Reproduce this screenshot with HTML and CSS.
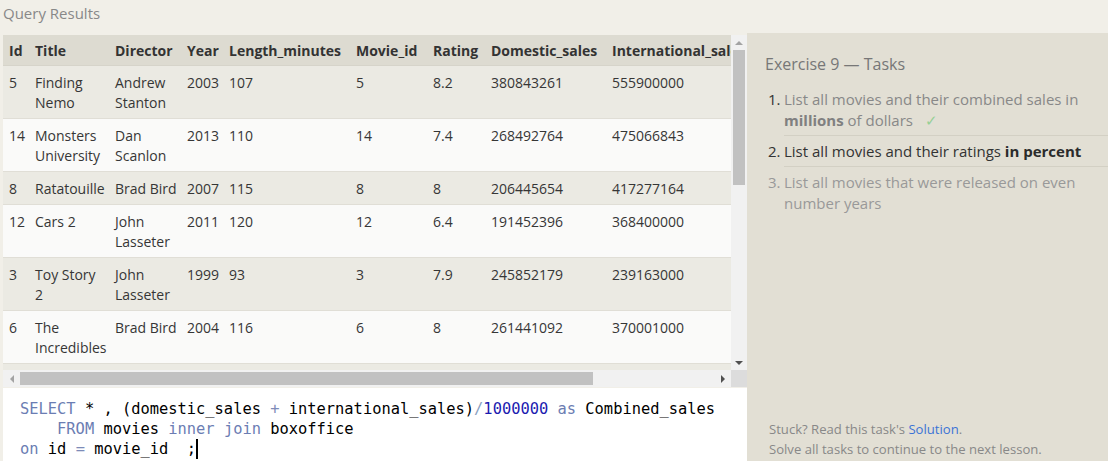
FILE: index.html
```html
<!DOCTYPE html>
<html lang="en">
<head>
<meta charset="utf-8">
<title>Query Results</title>
<link rel="stylesheet" href="styles.css">
</head>
<body>
<div class="app">
  <section class="left">
    <div class="title">Query Results</div>
    <div class="results">
      <div class="viewport">
        <table class="grid">
          <colgroup>
            <col class="c-id"><col class="c-title"><col class="c-dir"><col class="c-year"><col class="c-len"><col class="c-mid"><col class="c-rat"><col class="c-dom"><col class="c-int"><col class="c-comb">
          </colgroup>
          <thead>
            <tr><th>Id</th><th>Title</th><th>Director</th><th>Year</th><th>Length_minutes</th><th>Movie_id</th><th>Rating</th><th>Domestic_sales</th><th>International_sales</th><th>Combined_sales</th></tr>
          </thead>
          <tbody>
            <tr><td>5</td><td>Finding<br>Nemo</td><td>Andrew<br>Stanton</td><td>2003</td><td>107</td><td>5</td><td>8.2</td><td>380843261</td><td>555900000</td><td>936</td></tr>
            <tr><td>14</td><td>Monsters<br>University</td><td>Dan<br>Scanlon</td><td>2013</td><td>110</td><td>14</td><td>7.4</td><td>268492764</td><td>475066843</td><td>743</td></tr>
            <tr><td>8</td><td>Ratatouille</td><td>Brad Bird</td><td>2007</td><td>115</td><td>8</td><td>8</td><td>206445654</td><td>417277164</td><td>623</td></tr>
            <tr><td>12</td><td>Cars 2</td><td>John<br>Lasseter</td><td>2011</td><td>120</td><td>12</td><td>6.4</td><td>191452396</td><td>368400000</td><td>559</td></tr>
            <tr><td>3</td><td>Toy Story<br>2</td><td>John<br>Lasseter</td><td>1999</td><td>93</td><td>3</td><td>7.9</td><td>245852179</td><td>239163000</td><td>485</td></tr>
            <tr><td>6</td><td>The<br>Incredibles</td><td>Brad Bird</td><td>2004</td><td>116</td><td>6</td><td>8</td><td>261441092</td><td>370001000</td><td>631</td></tr>
            <tr><td>7</td><td>Cars</td><td>John<br>Lasseter</td><td>2006</td><td>117</td><td>7</td><td>7.2</td><td>244082982</td><td>217900167</td><td>461</td></tr>
          </tbody>
        </table>
      </div>
      <div class="vscroll">
        <div class="sbtn"><span class="tri tri-up"></span></div>
        <div class="vtrack"><div class="vthumb"></div></div>
        <div class="sbtn"><span class="tri tri-down"></span></div>
      </div>
      <div class="hscroll">
        <div class="sbtn hbtn"><span class="tri tri-left"></span></div>
        <div class="htrack"><div class="hthumb"></div></div>
        <div class="sbtn hbtn"><span class="tri tri-right"></span></div>
      </div>
      <div class="corner"></div>
    </div>
    <div class="editor"><pre class="code"><span class="kw">SELECT</span> * , (domestic_sales <span class="op">+</span> international_sales)<span class="sl">/</span><span class="num">1000000</span> <span class="kw">as</span> Combined_sales
    <span class="kw">FROM</span> movies <span class="kw">inner join</span> boxoffice
<span class="kw">on</span> id <span class="op">=</span> movie_id  ;<span class="caret"></span></pre></div>
  </section>
  <aside class="panel">
    <h2 class="ex-title">Exercise 9 — Tasks</h2>
    <ol class="tasks">
      <li class="task done"><span class="n">1.</span><div class="tbody">List all movies and their combined sales in<br><b>millions</b> of dollars <span class="check">✓</span></div></li>
      <li class="task active"><span class="n">2.</span><div class="tbody">List all movies and their ratings <b>in percent</b></div></li>
      <li class="task todo"><span class="n">3.</span><div class="tbody">List all movies that were released on even<br>number years</div></li>
    </ol>
    <div class="foot">
      <div>Stuck? Read this task's <a class="sol" href="#">Solution</a>.</div>
      <div>Solve all tasks to continue to the next lesson.</div>
    </div>
  </aside>
</div>
</body>
</html>
```
FILE: styles.css
```css
* { box-sizing: border-box; }
html, body { margin: 0; padding: 0; }
body {
  width: 1108px;
  height: 461px;
  overflow: hidden;
  background: #f1efe8;
  font-family: "Open Sans", "Noto Sans", sans-serif;
  color: #363636;
}
.app {
  display: grid;
  grid-template-columns: 747px 361px;
  height: 461px;
}
.left {
  padding-left: 3px;
  display: flex;
  flex-direction: column;
}
.title {
  height: 35px;
  font-size: 15px;
  line-height: 27px;
  color: #888;
}
.results {
  display: grid;
  grid-template-columns: 728px 16px;
  grid-template-rows: 335px 17px;
}
.viewport {
  overflow: hidden;
  background: #fafaf9;
}
.grid {
  border-collapse: collapse;
  table-layout: fixed;
  width: 881px;
  font-size: 14px;
  line-height: 20px;
}
.c-id { width: 26px; }
.c-title { width: 80px; }
.c-dir { width: 72px; }
.c-year { width: 42px; }
.c-len { width: 127px; }
.c-mid { width: 77px; }
.c-rat { width: 58px; }
.c-dom { width: 121px; }
.c-int { width: 155px; }
.c-comb { width: 123px; }
.grid th, .grid td {
  text-align: left;
  vertical-align: top;
  white-space: nowrap;
  padding: 7px 6px 5px 6px;
  border-bottom: 1px solid #e0ded6;
}
.grid th {
  background: #dddbd1;
  font-weight: 700;
  color: #333;
  padding-top: 6px;
  padding-bottom: 4px;
  border-bottom: 1px solid #d6d4ca;
}
.grid tbody tr:nth-child(odd) td { background: #ebeae3; }
.grid tbody tr:nth-child(even) td { background: #fafaf9; }

.vscroll {
  background: #f1f1f1;
  display: flex;
  flex-direction: column;
}
.sbtn {
  height: 15px;
  flex: none;
  display: flex;
  align-items: center;
  justify-content: center;
}
.vtrack { flex: 1; padding: 0 2px 0 2px; }
.vthumb { height: 135px; background: #c1c1c1; }
.hscroll {
  background: #f1f1f1;
  display: flex;
  align-items: stretch;
}
.hbtn { width: 17px; height: auto; }
.htrack { flex: 1; padding: 2px 0; }
.hthumb { width: 573px; height: 100%; background: #c1c1c1; }
.corner { background: #dcdcdc; }

.tri { width: 0; height: 0; border-style: solid; }
.tri-up { border-width: 0 4px 4px 4px; border-color: transparent transparent #a3a3a3 transparent; }
.tri-down { border-width: 4px 4px 0 4px; border-color: #505050 transparent transparent transparent; }
.tri-left { border-width: 4px 4px 4px 0; border-color: transparent #a3a3a3 transparent transparent; }
.tri-right { border-width: 4px 0 4px 4px; border-color: transparent transparent transparent #505050; }

.editor {
  margin-top: 1px;
  flex: 1;
  background: #fff;
}
.code {
  margin: 0;
  padding: 11px 0 0 17px;
  font-family: "DejaVu Sans Mono", "Liberation Mono", monospace;
  font-size: 15.4px;
  line-height: 20px;
  color: #000;
}
.kw { color: #6b7db3; }
.op { color: #7d8bb8; }
.sl { color: #8aa0c0; }
.num { color: #1b1bb0; }
.caret {
  display: inline-block;
  width: 0;
  height: 20px;
  border-left: 2px solid #000;
  vertical-align: top;
}

.panel {
  margin-top: 33px;
  background: #e2dfd4;
  display: flex;
  flex-direction: column;
  padding: 0 0 2px 18px;
}
.ex-title {
  margin: 0;
  padding-top: 19px;
  font-size: 16px;
  font-weight: 400;
  line-height: 24px;
  color: #777;
}
.tasks {
  list-style: none;
  margin: 8px 0 0 3px;
  padding: 0;
  font-size: 15px;
  line-height: 21px;
}
.task { display: flex; }
.task .n { width: 16px; flex: none; padding-top: 5px; }
.task .tbody {
  flex: 1;
  padding: 5px 0 4px 0;
  border-bottom: 1px solid #d3d0c4;
  white-space: nowrap;
}
.task:last-child .tbody { border-bottom: 0; }
.done .n { color: #333; }
.done .tbody { color: #888; }
.done b { color: #808080; }
.active .n, .active .tbody { color: #333; }
.active b { color: #2b2b2b; }
.todo .n, .todo .tbody { color: #999; }
.check { color: #96d096; margin-left: 8px; }
.foot {
  margin-top: auto;
  padding-left: 4px;
  font-size: 13.1px;
  line-height: 20px;
  color: #888;
}
.sol { color: #3b73d6; text-decoration: none; }
```
